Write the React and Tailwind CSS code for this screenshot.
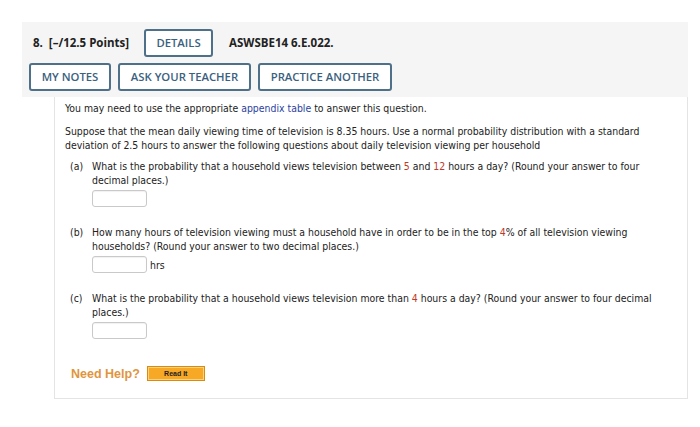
import React from 'react';

const hdrBtn =
  "h-[28px] flex items-center justify-center border-2 border-[#4e7088] rounded-[3px] bg-white text-[#3b6180] text-[11.3px] font-semibold";

const Input = () => (
  <div className="w-[55px] h-[17px] border border-[#c9c9c9] rounded-[3px] bg-white shadow-[inset_0_1px_1px_rgba(0,0,0,0.06)]" />
);

const Red = ({ children }) => <span className="text-[#c0392b]">{children}</span>;

const Part = ({ label, children }) => (
  <div className="flex ml-[5px]">
    <div className="w-[22px] shrink-0">{label}</div>
    <div className="flex-1 pr-[30px]">{children}</div>
  </div>
);

const App = () => {
  return (
    <div className="w-[700px] h-[427px] bg-white pt-[22px] pl-[22px]">
      {/* header */}
      <div className="w-[666px] h-[75px] bg-[#f5f5f5] pt-[7px] pl-[7px] font-['Open_Sans',sans-serif]">
        <div className="flex items-center">
          <span className="ml-[4px] text-[11.5px] font-bold text-[#222] w-[111px]">8.&nbsp; [–/12.5 Points]</span>
          <div className={hdrBtn + " w-[69px]"}>DETAILS</div>
          <span className="ml-[16px] text-[11.5px] font-bold text-[#222]">ASWSBE14 6.E.022.</span>
        </div>
        <div className="flex gap-[7px] mt-[6px]">
          <div className={hdrBtn + " w-[82px]"}>MY NOTES</div>
          <div className={hdrBtn + " w-[133px]"}>ASK YOUR TEACHER</div>
          <div className={hdrBtn + " w-[134px]"}>PRACTICE ANOTHER</div>
        </div>
      </div>

      {/* body */}
      <div
        className="ml-[32px] w-[634px] h-[302px] border border-t-0 border-[#e4e4e4] bg-white pl-[10px] pt-[4px] text-[10.4px] leading-[14px] text-[#222] font-['DejaVu_Sans_Condensed','DejaVu_Sans',sans-serif] font-stretch-condensed"
      >
        <p>
          You may need to use the appropriate <span className="text-[#2b3fa0]">appendix table</span> to answer this question.
        </p>
        <p className="mt-[9px] pr-[40px]">
          Suppose that the mean daily viewing time of television is 8.35 hours. Use a normal probability distribution with a standard deviation of 2.5 hours to answer the following questions about daily television viewing per household
        </p>

        <div className="mt-[7px]">
          <Part label="(a)">
            <p>
              What is the probability that a household views television between <Red>5</Red> and <Red>12</Red> hours a day? (Round your answer to four decimal places.)
            </p>
            <div className="mt-[3px]"><Input /></div>
          </Part>
        </div>

        <div className="mt-[18px]">
          <Part label="(b)">
            <p>
              How many hours of television viewing must a household have in order to be in the top <Red>4</Red>% of all television viewing households? (Round your answer to two decimal places.)
            </p>
            <div className="mt-[3px] flex items-center gap-[3px]">
              <Input />
              <span>hrs</span>
            </div>
          </Part>
        </div>

        <div className="mt-[18px]">
          <Part label="(c)">
            <p>
              What is the probability that a household views television more than <Red>4</Red> hours a day? (Round your answer to four decimal places.)
            </p>
            <div className="mt-[3px]"><Input /></div>
          </Part>
        </div>

        <div className="flex items-center mt-[27px] ml-[6px] font-['Liberation_Sans',Arial,sans-serif]">
          <span className="text-[#e0953e] text-[12.5px] font-bold">Need Help?</span>
          <div className="ml-[7px] w-[58px] h-[15px] flex items-center justify-center bg-[#f7a824] border border-[#d98a12] shadow-[inset_0_0_0_1px_#fcd27a] text-[7px] font-bold text-[#222]">
            Read It
          </div>
        </div>
      </div>
    </div>
  );
};

export default App;
